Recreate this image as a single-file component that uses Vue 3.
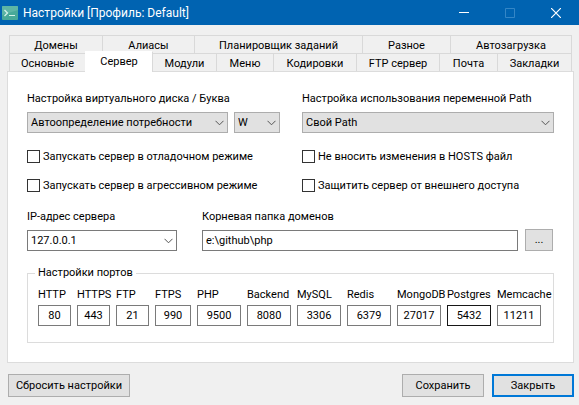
<script setup>
import { ref } from 'vue'

const upperTabs = ['Домены', 'Алиасы', 'Планировщик заданий', 'Разное', 'Автозагрузка']
const lowerTabs = ['Основные', 'Сервер', 'Модули', 'Меню', 'Кодировки', 'FTP сервер', 'Почта', 'Закладки']
const active = ref('Сервер')

const disk = ref('Автоопределение потребности')
const letter = ref('W')
const pathMode = ref('Свой Path')
const ip = ref('127.0.0.1')
const root = ref('e:\\github\\php')

const flags = ref([
  { id: 'debug', label: 'Запускать сервер в отладочном режиме', on: false },
  { id: 'hosts', label: 'Не вносить изменения в HOSTS файл', on: false },
  { id: 'aggressive', label: 'Запускать сервер в агрессивном режиме', on: false },
  { id: 'protect', label: 'Защитить сервер от внешнего доступа', on: false },
])

const ports = ref([
  { name: 'HTTP', value: '80' },
  { name: 'HTTPS', value: '443' },
  { name: 'FTP', value: '21' },
  { name: 'FTPS', value: '990' },
  { name: 'PHP', value: '9500' },
  { name: 'Backend', value: '8080' },
  { name: 'MySQL', value: '3306' },
  { name: 'Redis', value: '6379' },
  { name: 'MongoDB', value: '27017' },
  { name: 'Postgres', value: '5432', hot: true },
  { name: 'Memcache', value: '11211' },
])
</script>

<template>
  <div class="window">
    <header class="titlebar">
      <svg class="logo" width="16" height="14" viewBox="0 0 16 14" aria-hidden="true">
        <rect width="16" height="14" rx="1" fill="#48a999" />
        <path d="M0 1a1 1 0 0 1 1-1h14a1 1 0 0 1 1 1v3L0 9z" fill="#5db5a5" />
        <path d="M2.5 4l3 3-3 3" fill="none" stroke="#d5f3ea" stroke-width="1.3" />
        <path d="M7 9.5h6" stroke="#d5f3ea" />
      </svg>
      <h1 class="title">Настройки [Профиль: Default]</h1>
      <button class="winbtn" type="button" aria-label="Свернуть">
        <svg width="10" height="10" viewBox="0 0 10 10"><path d="M0 4.5h10" stroke="#fff" /></svg>
      </button>
      <button class="winbtn" type="button" aria-label="Развернуть" disabled>
        <svg width="10" height="10" viewBox="0 0 10 10"><path d="M.5 .5h9v9h-9z" fill="none" stroke="#3486c6" /></svg>
      </button>
      <button class="winbtn" type="button" aria-label="Закрыть окно">
        <svg width="10" height="10" viewBox="0 0 10 10"><path d="M0 0l10 10M10 0L0 10" stroke="#fff" stroke-width="1.2" /></svg>
      </button>
    </header>

    <main class="body">
      <nav class="tabs" role="tablist">
        <div class="tabrow upper">
          <button v-for="t in upperTabs" :key="t" class="tab" :class="{ active: t === active }" type="button" role="tab" :aria-selected="t === active" @click="active = t">{{ t }}</button>
        </div>
        <div class="tabrow lower">
          <button v-for="t in lowerTabs" :key="t" class="tab" :class="{ active: t === active }" type="button" role="tab" :aria-selected="t === active" @click="active = t">{{ t }}</button>
        </div>
      </nav>

      <section class="panel">
        <div class="columns">
          <div class="field">
            <label class="caption" for="disk">Настройка виртуального диска / Буква</label>
            <div class="pair">
              <div class="combo grow">
                <select id="disk" v-model="disk" class="box filled"><option>Автоопределение потребности</option></select>
                <svg class="chevron" width="9" height="6" viewBox="0 0 9 6"><path d="M.5 .8l4 4 4-4" /></svg>
              </div>
              <div class="combo letter">
                <select v-model="letter" class="box filled" aria-label="Буква"><option>W</option></select>
                <svg class="chevron" width="9" height="6" viewBox="0 0 9 6"><path d="M.5 .8l4 4 4-4" /></svg>
              </div>
            </div>
          </div>
          <div class="field">
            <label class="caption" for="path">Настройка использования переменной Path</label>
            <div class="combo">
              <select id="path" v-model="pathMode" class="box filled"><option>Свой Path</option></select>
              <svg class="chevron" width="9" height="6" viewBox="0 0 9 6"><path d="M.5 .8l4 4 4-4" /></svg>
            </div>
          </div>
        </div>

        <div class="columns checks">
          <label v-for="f in flags" :key="f.id" class="check" :for="f.id">
            <input :id="f.id" v-model="f.on" type="checkbox" class="tick" />
            <span>{{ f.label }}</span>
          </label>
        </div>

        <div class="address">
          <div class="field">
            <label class="caption" for="ip">IP-адрес сервера</label>
            <div class="combo">
              <input id="ip" v-model="ip" class="box" type="text" />
              <svg class="chevron" width="9" height="6" viewBox="0 0 9 6"><path d="M.5 .8l4 4 4-4" /></svg>
            </div>
          </div>
          <div class="field">
            <label class="caption" for="root">Корневая папка доменов</label>
            <div class="pair browse">
              <input id="root" v-model="root" class="box grow" type="text" />
              <button class="btn dots" type="button" aria-label="Обзор">...</button>
            </div>
          </div>
        </div>

        <fieldset class="group">
          <legend>Настройки портов</legend>
          <div class="ports">
            <label v-for="p in ports" :key="p.name" class="port">
              <span>{{ p.name }}</span>
              <input v-model="p.value" class="box num" :class="{ hot: p.hot }" type="text" />
            </label>
          </div>
        </fieldset>
      </section>

      <footer class="actions">
        <button class="btn reset" type="button">Сбросить настройки</button>
        <button class="btn" type="button">Сохранить</button>
        <button class="btn primary" type="button">Закрыть</button>
      </footer>
    </main>
  </div>
</template>

<style>
body {
  margin: 0;
  background: #f0f0f0;
}
</style>

<style scoped>
.window,
.window * {
  box-sizing: border-box;
}
.window {
  font-family: Roboto, "Noto Sans", sans-serif;
  font-size: 11px;
  line-height: 14px;
  color: #000;
  background: #f0f0f0;
}
button,
input,
select {
  font: inherit;
  color: inherit;
  margin: 0;
  border-radius: 0;
}
.titlebar {
  display: flex;
  align-items: center;
  height: 25px;
  padding-left: 2px;
  background: #0063b1;
}
.title {
  flex: 1;
  margin: 0 0 0 5px;
  font-size: 12px;
  font-weight: 400;
  line-height: 16px;
  color: #fff;
}
.winbtn {
  display: flex;
  align-items: center;
  justify-content: center;
  width: 46px;
  height: 25px;
  padding: 0;
  border: 0;
  background: none;
}
.body {
  padding: 10px 5px 8px 7px;
}
.tabs {
  padding: 0 2px;
}
.tabrow {
  display: grid;
  height: 18px;
  border-right: 1px solid #d9d9d9;
}
.upper {
  grid-template-columns: 93fr 92fr 168fr 88fr 121fr;
}
.lower {
  grid-template-columns: 76fr 67fr 64fr 57fr 83fr 83fr 58fr 74fr;
}
.tab {
  padding: 2px 0 0;
  border: solid #d9d9d9;
  border-width: 1px 0 0 1px;
  background: #f0f0f0;
  white-space: nowrap;
}
.tab.active {
  position: relative;
  z-index: 1;
  margin: -2px -1px -1px 0;
  padding: 0 0 1px;
  border-color: #fff #d9d9d9 #fff #fff;
  border-right-width: 1px;
  background: #fff;
}
.panel {
  display: flex;
  flex-direction: column;
  padding: 20px 19px 19px 19px;
  border: 1px solid #dcdcdc;
  background: #fff;
}
.columns {
  display: grid;
  grid-template-columns: 253fr 252fr;
  column-gap: 22px;
}
.field {
  display: flex;
  flex-direction: column;
  gap: 6px;
}
.caption {
  white-space: nowrap;
}
.pair {
  display: flex;
  gap: 6px;
}
.grow {
  flex: 1;
}
.combo {
  display: grid;
  align-items: center;
}
.combo > * {
  grid-area: 1 / 1;
}
.letter {
  width: 46px;
}
.box {
  width: 100%;
  min-width: 0;
  height: 21px;
  padding: 0 3px;
  border: 1px solid #7a7a7a;
  background: #fff;
  appearance: none;
}
.box.filled {
  border-color: #adadad;
  background: #e1e1e1;
}
.chevron {
  justify-self: end;
  margin-right: 4px;
  fill: none;
  stroke: #555;
  pointer-events: none;
}
.checks {
  row-gap: 15px;
  margin-top: 17px;
}
.check {
  display: flex;
  align-items: flex-start;
  gap: 3px;
  white-space: nowrap;
}
.tick {
  flex: none;
  width: 13px;
  height: 13px;
  border: 1px solid #333;
  background: #fff;
  appearance: none;
}
.tick:checked {
  box-shadow: inset 0 0 0 2px #fff;
  background: #333;
}
.address {
  display: grid;
  grid-template-columns: 150fr 351fr;
  column-gap: 25px;
  margin-top: 17px;
  padding-right: 1px;
}
.browse {
  align-items: flex-end;
  gap: 7px;
  height: 21px;
}
.btn {
  width: 82px;
  height: 23px;
  padding: 0;
  border: 1px solid #adadad;
  background: #e1e1e1;
}
.btn.dots {
  width: 28px;
  height: 22px;
}
.btn.primary {
  border: 2px solid #0078d7;
}
.group {
  min-width: 0;
  margin: 15px 0 0;
  padding: 8px 12px 16px 10px;
  border: 1px solid #dcdcdc;
}
.group legend {
  margin-left: -3px;
  padding: 0 3px;
}
.ports {
  display: grid;
  grid-template-columns: 33fr 33fr 33fr 36fr repeat(7, 44fr);
  column-gap: 6px;
}
.port {
  display: flex;
  flex-direction: column;
  gap: 3px;
  min-width: 0;
  white-space: nowrap;
}
.num {
  padding: 0;
  text-align: center;
}
.num.hot {
  border-color: #171717;
}
.actions {
  display: flex;
  gap: 8px;
  margin-top: 11px;
  padding-left: 1px;
}
.reset {
  width: 122px;
  margin-right: auto;
}
</style>
